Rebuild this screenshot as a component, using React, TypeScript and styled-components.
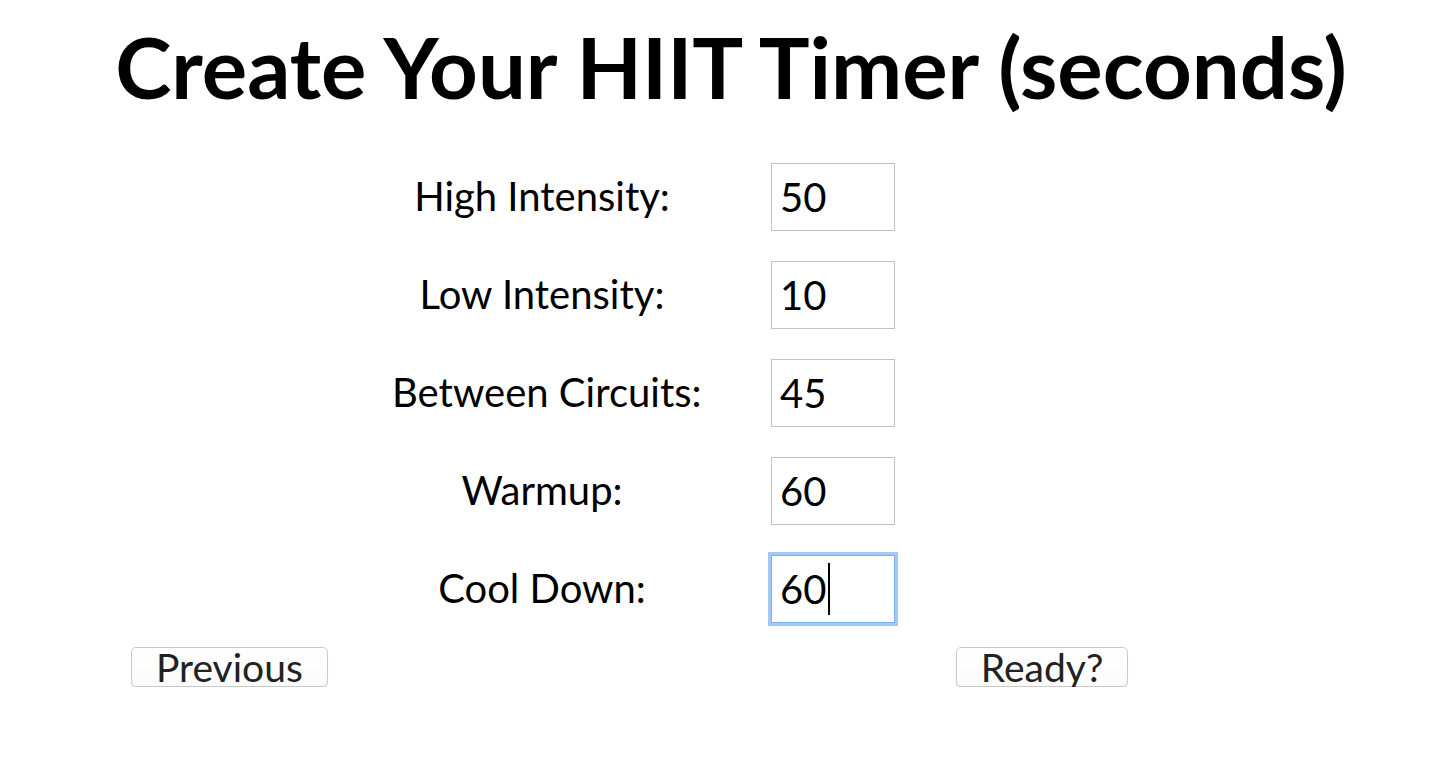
import React from "react";
import styled, { createGlobalStyle } from "styled-components";

const Global = createGlobalStyle`
  html, body { margin: 0; padding: 0; background: #ffffff; }
  body { font-family: "Lato", "Noto Sans", sans-serif; color: #000; }
`;

const Page = styled.div`
  width: 1445px;
  padding-top: 18px;
`;

const Title = styled.h1`
  margin: 0 0 0 17px;
  text-align: center;
  font-size: 85px;
  font-weight: 700;
  line-height: 96px;
  white-space: nowrap;
`;

const Form = styled.div`
  display: grid;
  grid-template-columns: 300px 124px;
  column-gap: 79px;
  row-gap: 30px;
  margin: 49px 0 0 392px;
  align-items: center;
`;

const Label = styled.label`
  text-align: center;
  white-space: nowrap;
  font-size: 40px;
  font-weight: 400;
  padding-bottom: 2px;
`;

const FieldWrap = styled.div`
  position: relative;
  width: 124px;
  height: 68px;
`;

const Field = styled.input<{ $focused?: boolean }>`
  box-sizing: border-box;
  display: block;
  width: 124px;
  height: 68px;
  padding: 0 8px;
  border: 1px solid ${(p) => (p.$focused ? "#7fb0ee" : "#c2c2c2")};
  outline: none;
  box-shadow: ${(p) => (p.$focused ? "0 0 0 3px #a4c8f5" : "none")};
  font-family: "Lato", "Noto Sans", sans-serif;
  font-size: 40px;
  color: #000;
  background: #fff;
  caret-color: transparent;
`;

const Caret = styled.span`
  position: absolute;
  left: 57px;
  top: 8px;
  width: 2px;
  height: 52px;
  background: #000;
  pointer-events: none;
`;

const ButtonRow = styled.div`
  display: flex;
  gap: 628px;
  margin: 24px 0 0 131px;
`;

const Button = styled.button`
  box-sizing: border-box;
  height: 40px;
  padding: 0 24px;
  border: 1px solid #c9c9c9;
  border-radius: 5px;
  background: linear-gradient(#ffffff, #fbfbfb);
  box-shadow: 0 1px 1px rgba(0, 0, 0, 0.14);
  font-family: "Lato", "Noto Sans", sans-serif;
  font-size: 39px;
  line-height: 36px;
  color: #222;
`;

const rows: [string, string][] = [
  ["High Intensity:", "50"],
  ["Low Intensity:", "10"],
  ["Between Circuits:", "45"],
  ["Warmup:", "60"],
  ["Cool Down:", "60"],
];

export default function App() {
  return (
    <Page>
      <Global />
      <Title>Create Your HIIT Timer (seconds)</Title>
      <Form>
        {rows.map(([label, value], i) => {
          const focused = i === rows.length - 1;
          return (
            <React.Fragment key={label}>
              <Label>{label}</Label>
              <FieldWrap>
                <Field defaultValue={value} $focused={focused} />
                {focused && <Caret />}
              </FieldWrap>
            </React.Fragment>
          );
        })}
      </Form>
      <ButtonRow>
        <Button>Previous</Button>
        <Button>Ready?</Button>
      </ButtonRow>
    </Page>
  );
}
